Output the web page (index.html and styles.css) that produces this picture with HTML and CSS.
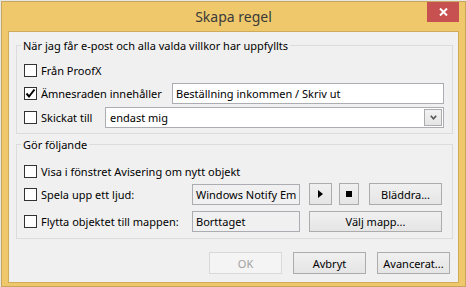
FILE: index.html
```html
<!DOCTYPE html>
<html lang="sv">
<head>
<meta charset="utf-8">
<title>Skapa regel</title>
<link rel="stylesheet" href="styles.css">
</head>
<body>
<div class="window">
  <div class="titlebar">
    <span class="title">Skapa regel</span>
    <button class="close" type="button" aria-label="Stäng">
      <svg width="9" height="8" viewBox="0 0 9 8"><path d="M1 0.5 L8 7.5 M8 0.5 L1 7.5" stroke="#fff" stroke-width="2" fill="none"/></svg>
    </button>
  </div>
  <div class="client">
    <fieldset class="group g1">
      <legend>När jag får e-post och alla valda villkor har uppfyllts</legend>
      <div class="row r1">
        <label class="chk"><span class="box"></span>Från ProofX</label>
      </div>
      <div class="row r2">
        <label class="chk"><span class="box"><svg width="11" height="11" viewBox="0 0 11 11"><path d="M1.5 5.5 L4 8.5 L9.5 1.5" stroke="#000" stroke-width="2" fill="none"/></svg></span>Ämnesraden innehåller</label>
        <div class="edit subject">Beställning inkommen / Skriv ut</div>
      </div>
      <div class="row r3">
        <label class="chk"><span class="box"></span>Skickat till</label>
        <div class="combo">
          <span class="combo-text">endast mig</span>
          <span class="drop"><svg width="7" height="5" viewBox="0 0 7 5"><path d="M0.8 0.8 L3.5 3.8 L6.2 0.8" stroke="#555" stroke-width="1.6" fill="none"/></svg></span>
        </div>
      </div>
    </fieldset>
    <fieldset class="group g2">
      <legend>Gör följande</legend>
      <div class="row s1">
        <label class="chk"><span class="box"></span>Visa i fönstret Avisering om nytt objekt</label>
      </div>
      <div class="row s2">
        <label class="chk wide"><span class="box"></span>Spela upp ett ljud:</label>
        <div class="edit ro">Windows Notify Em</div>
        <button class="btn play" type="button"><svg width="5" height="8" viewBox="0 0 5 8"><path d="M0 0 L5 4 L0 8 Z" fill="#000"/></svg></button>
        <button class="btn stop" type="button"><span class="sq"></span></button>
        <button class="btn browse" type="button">Bläddra...</button>
      </div>
      <div class="row s3">
        <label class="chk wide"><span class="box"></span>Flytta objektet till mappen:</label>
        <div class="edit ro">Borttaget</div>
        <button class="btn folder" type="button">Välj mapp...</button>
      </div>
    </fieldset>
    <div class="buttons">
      <button class="btn dlg disabled" type="button">OK</button>
      <button class="btn dlg" type="button">Avbryt</button>
      <button class="btn dlg" type="button">Avancerat...</button>
    </div>
  </div>
</div>
</body>
</html>
```

FILE: styles.css
```css
* { box-sizing: border-box; }

body {
  margin: 0;
  background: #e6e6e6;
  font-family: "Noto Sans", "Open Sans", sans-serif;
  font-size: 11px;
  color: #000;
}

.window {
  margin: 1px 0 0 1px;
  width: 465px;
  height: 286px;
  border: 1px solid #c7a55b;
  background: #efc86c;
  display: flex;
  flex-direction: column;
}

.titlebar {
  height: 29px;
  flex: none;
  display: grid;
  grid-template-columns: 1fr auto 1fr;
  align-items: start;
}

.title {
  grid-column: 2;
  font-size: 14px;
  line-height: 20px;
  margin-top: 5px;
  color: #3a3a3a;
}

.close {
  grid-column: 3;
  justify-self: end;
  margin-right: 6px;
  width: 32px;
  height: 20px;
  border: 0;
  padding: 0;
  background: #c75050;
  display: flex;
  align-items: center;
  justify-content: center;
}

.client {
  flex: 1;
  margin: 0 6px 3px 6px;
  border: 1px solid #cfab5c;
  background: #f0f0f0;
  padding: 6px 5px 0 7px;
  display: flex;
  flex-direction: column;
}

.group {
  margin: 0;
  border: 1px solid #dcdcdc;
  min-width: 0;
}

.group legend {
  font-size: 11px;
  line-height: 15px;
  padding: 0 2px;
  margin-left: -3px;
}

.g1 { padding: 7px 8px 5px 7px; }
.g2 { margin-top: 3px; padding: 9px 10px 6px 7px; }

.row {
  display: flex;
  align-items: center;
}

.r1 { height: 21px; }
.r2 { height: 21px; margin-top: 2px; }
.r3 { height: 21px; margin-top: 3px; }
.s1 { height: 21px; }
.s2 { height: 22px; margin-top: 1px; }
.s3 { height: 21px; margin-top: 6px; }

.chk {
  display: flex;
  align-items: center;
  line-height: 15px;
  white-space: nowrap;
}

.chk.wide { flex: 1; }

.box {
  width: 13px;
  height: 13px;
  border: 1px solid #333;
  background: #fff;
  margin-right: 4px;
  display: flex;
  align-items: center;
  justify-content: center;
  flex: none;
}

.edit {
  height: 21px;
  border: 1px solid #abadb3;
  background: #fff;
  padding: 0 3px;
  line-height: 19px;
  white-space: nowrap;
  overflow: hidden;
}

.subject {
  margin-left: auto;
  width: 272px;
}

.edit.ro {
  width: 108px;
  background: #f0f0f0;
  flex: none;
}

.combo {
  margin-left: auto;
  width: 339px;
  height: 21px;
  border: 1px solid #abadb3;
  background: #fff;
  display: flex;
  align-items: center;
  padding: 0 1px 0 4px;
}

.combo-text { flex: 1; line-height: 19px; }

.drop {
  width: 18px;
  height: 17px;
  border: 1px solid #acacac;
  background: linear-gradient(#f2f2f2, #e5e5e5);
  display: flex;
  align-items: center;
  justify-content: center;
}

.btn {
  font-family: inherit;
  font-size: 11px;
  color: #000;
  border: 1px solid #acacac;
  background: linear-gradient(#f0f0f0, #e5e5e5);
  padding: 0;
  height: 21px;
  display: flex;
  align-items: center;
  justify-content: center;
  flex: none;
}

.play { width: 23px; margin-left: 9px; height: 22px; }
.stop { width: 20px; margin-left: 7px; height: 22px; }
.sq { width: 6px; height: 6px; background: #000; }
.browse { width: 73px; margin-left: 10px; height: 22px; }
.folder { width: 133px; margin-left: 9px; }

.buttons {
  display: flex;
  justify-content: flex-end;
  gap: 11px;
  margin-top: 13px;
  margin-right: 3px;
}

.dlg { width: 73px; height: 22px; }

.dlg.disabled {
  color: #a0a0a0;
  border-color: #d9d9d9;
  background: #f4f4f4;
}
```
